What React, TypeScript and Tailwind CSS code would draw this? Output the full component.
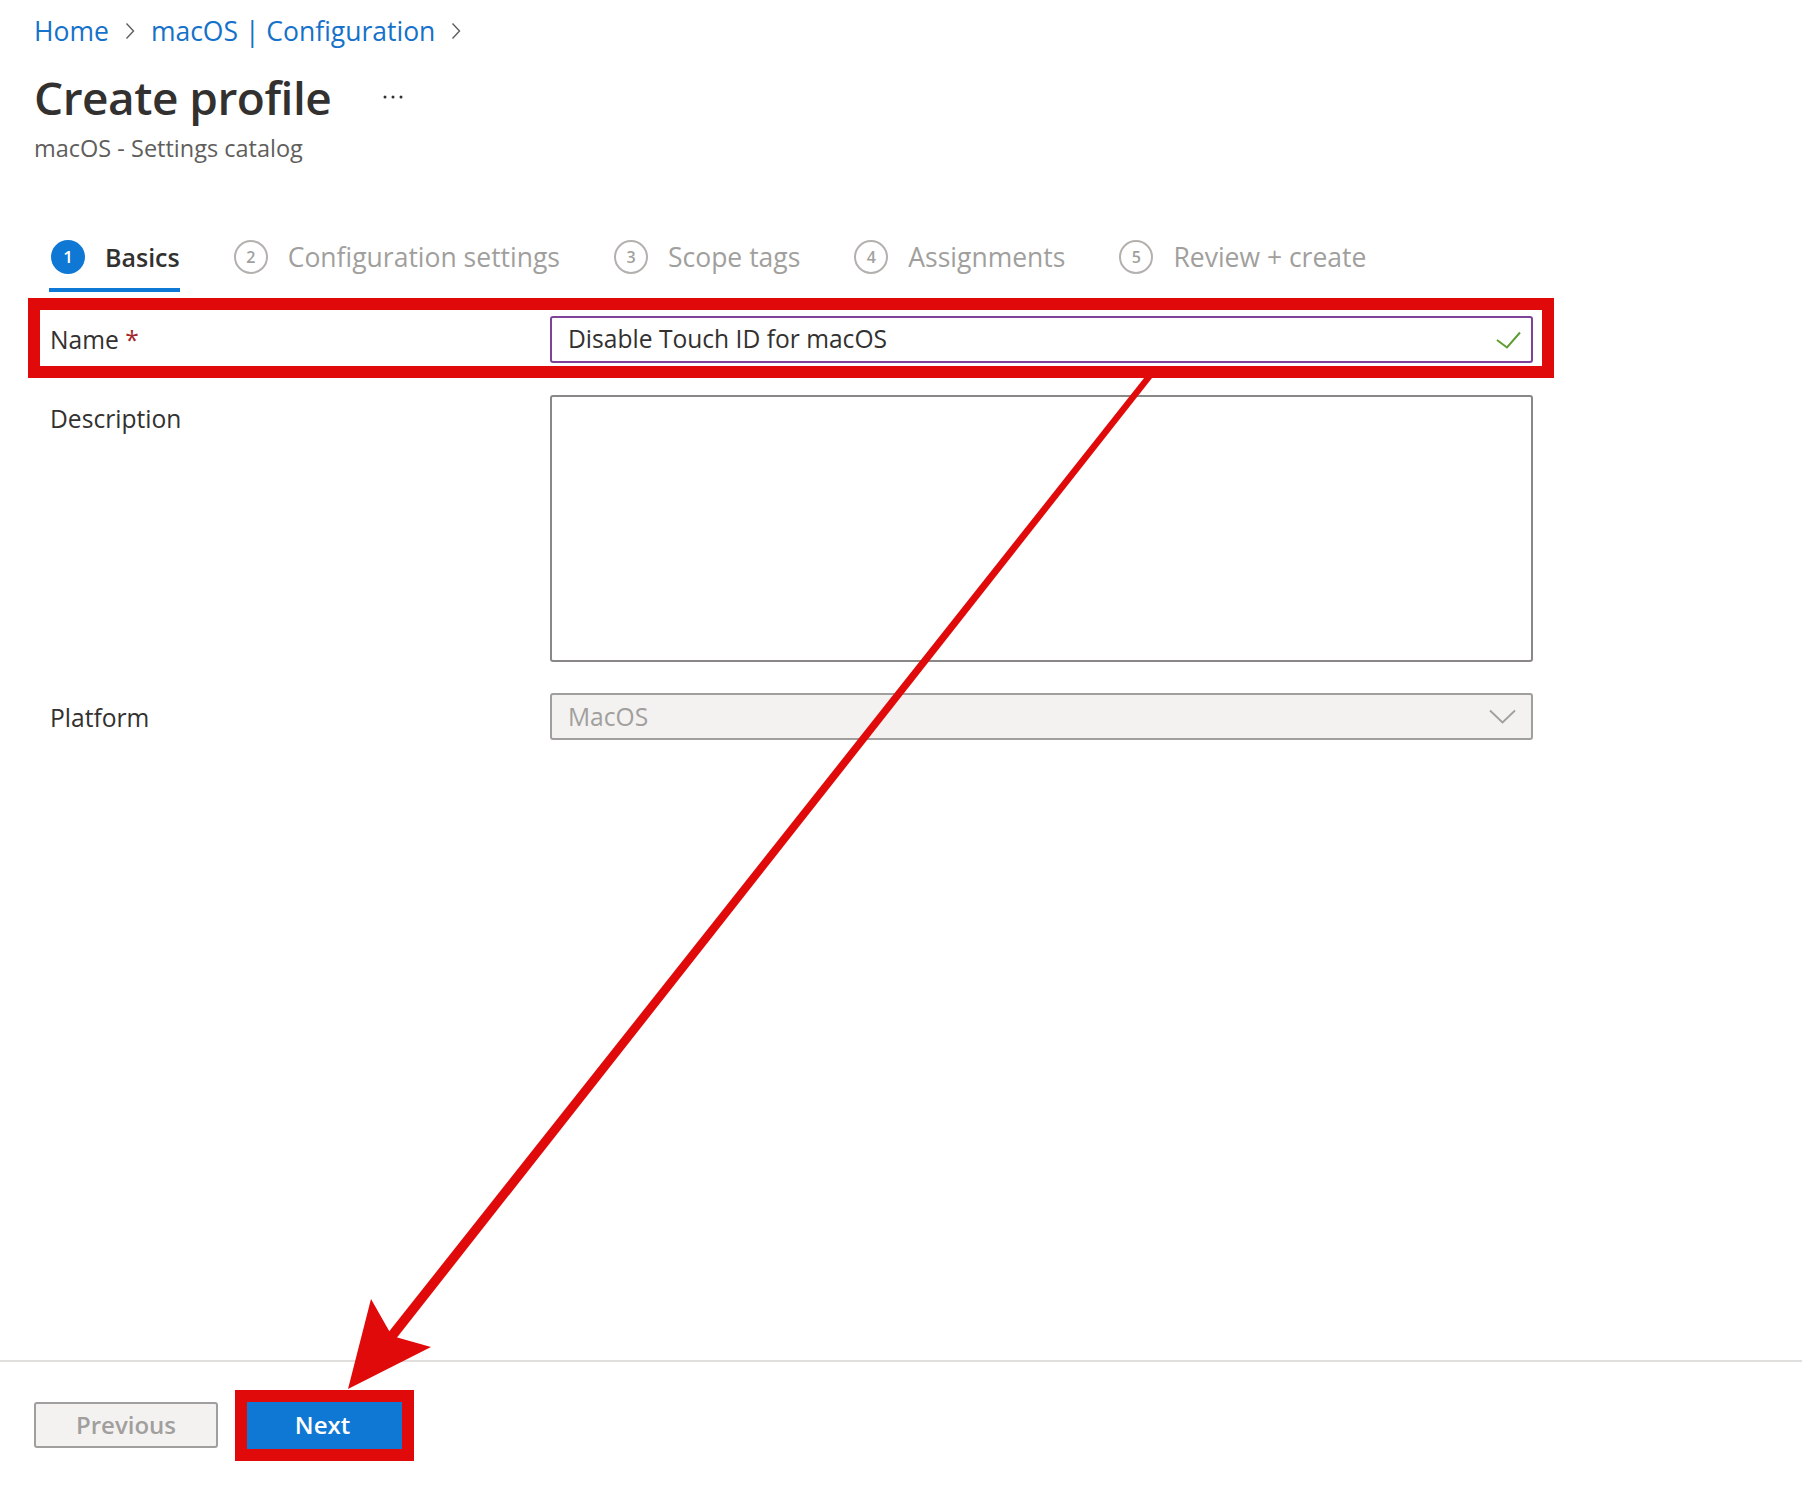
const steps = [
    {n: 1, label: "Basics"},
    {n: 2, label: "Configuration settings"},
    {n: 3, label: "Scope tags"},
    {n: 4, label: "Assignments"},
    {n: 5, label: "Review + create"},
];

function Chevron() {
    return (
        <svg width="10" height="18" viewBox="0 0 10 18" fill="none">
            <polyline points="1.5,1.5 8.5,9 1.5,16.5" stroke="#605e5c" strokeWidth="1.4" />
        </svg>
    );
}

function Dots() {
    return (
        <svg width="20" height="4" viewBox="0 0 20 4">
            <circle cx="2" cy="2" r="1.5" fill="#323130" />
            <circle cx="10" cy="2" r="1.5" fill="#323130" />
            <circle cx="18" cy="2" r="1.5" fill="#323130" />
        </svg>
    );
}

// annotation arrow drawn over the page
function Arrow() {
    return (
        <svg
            className="pointer-events-none absolute left-0 top-0"
            width="1802"
            height="1488"
            viewBox="0 0 1802 1488">
            <polygon points="1154.4,374.9 1149.6,371.1 376,1348 384,1354" fill="#e10a0a" />
            <polygon points="348,1389 371,1299 392,1336 431,1347" fill="#e10a0a" />
        </svg>
    );
}

export default function App() {
    return (
        <div className="relative flex min-h-[1488px] w-full flex-col bg-white font-['Open_Sans',sans-serif] text-[#323130]">
            <header className="px-[34px] pt-[13px]">
                <nav className="flex h-[36px] items-center gap-[16px] text-[26.5px] leading-[36px] text-[#1571c9]">
                    <span>Home</span>
                    <Chevron />
                    <span>macOS | Configuration</span>
                    <Chevron />
                </nav>
                <div className="mt-[20px] flex h-[56px] items-center gap-[52px]">
                    <h1 className="text-[46px] font-semibold leading-[56px] tracking-[-0.5px]">Create profile</h1>
                    <Dots />
                </div>
                <p className="mt-[8px] text-[23.5px] leading-[30px] text-[#605e5c]">macOS - Settings catalog</p>
            </header>

            <div className="ml-[49px] mt-[76px] flex gap-[52px]">
                {steps.map((step) => {
                    const active = step.n === 1;
                    return (
                        <div
                            key={step.n}
                            className={
                                active
                                    ? "flex items-center gap-[20px] border-b-4 border-[#0f78d4] pb-[13px]"
                                    : "flex items-center gap-[20px] border-b-4 border-transparent pb-[13px]"
                            }>
                            {active ? (
                                <span className="ml-[2px] flex h-[34px] w-[34px] items-center justify-center rounded-full bg-[#0f78d4] text-[17px] font-semibold text-white">
                                    {step.n}
                                </span>
                            ) : (
                                <span className="ml-[2px] flex h-[34px] w-[34px] items-center justify-center rounded-full border-2 border-[#b3b0ad] text-[16px] font-semibold text-[#a19f9d]">
                                    {step.n}
                                </span>
                            )}
                            <span
                                className={
                                    active
                                        ? "text-[25px] font-semibold leading-[36px] text-[#323130]"
                                        : "text-[26.5px] leading-[36px] text-[#a19f9d]"
                                }>
                                {step.label}
                            </span>
                        </div>
                    );
                })}
            </div>

            <form className="ml-[49px] mt-[6px] w-[1484px] text-[24.6px]">
                <div className="-mx-[21px] grid grid-cols-[501px_983px] items-center border-[12px] border-[#e10a0a] px-[9px] pb-[3px] pt-[6px]">
                    <label className="pl-[1px] leading-[34px]">
                        Name <span className="text-[#a4262c]">*</span>
                    </label>
                    <div className="flex h-[47px] items-center justify-between rounded-[3px] border-2 border-[#7e4399] pl-[16px] pr-[10px]">
                        <span>Disable Touch ID for macOS</span>
                        <svg width="25" height="18" viewBox="0 0 25 18" fill="none">
                            <polyline points="1,9 11,16.5 24,1.5" stroke="#5c9e31" strokeWidth="2" />
                        </svg>
                    </div>
                </div>

                <div className="mt-[17px] grid grid-cols-[501px_983px] items-start">
                    <label className="pl-[1px] pt-[7px] leading-[34px]">Description</label>
                    <div className="h-[267px] rounded-[3px] border-2 border-[#8a8886]" />
                </div>

                <div className="mt-[31px] grid grid-cols-[501px_983px] items-center">
                    <label className="pl-[1px] pt-[3px] leading-[34px]">Platform</label>
                    <div className="flex h-[47px] items-center justify-between rounded-[3px] border-2 border-[#a19f9d] bg-[#f3f2f1] pl-[16px] pr-[15px]">
                        <span className="pt-[2px] text-[#a19f9d]">MacOS</span>
                        <svg width="27" height="15" viewBox="0 0 27 15" fill="none">
                            <polyline points="1,1.5 13.5,13.5 26,1.5" stroke="#a19f9d" strokeWidth="1.8" />
                        </svg>
                    </div>
                </div>
            </form>

            <div className="flex-1" />

            <footer className="flex h-[128px] items-center border-t-2 border-[#e1dfdd] px-[34px]">
                <button
                    type="button"
                    className="h-[46px] w-[184px] rounded-[3px] border-2 border-[#a19f9d] bg-[#f3f2f1] text-[24px] font-semibold text-[#a19f9d]">
                    Previous
                </button>
                <div className="ml-[17px] border-[12px] border-[#e10a0a]">
                    <button
                        type="button"
                        className="block h-[47px] w-[155px] bg-[#0f78d4] pr-[4px] text-[24px] font-semibold text-white">
                        Next
                    </button>
                </div>
            </footer>

            <Arrow />
        </div>
    );
}
